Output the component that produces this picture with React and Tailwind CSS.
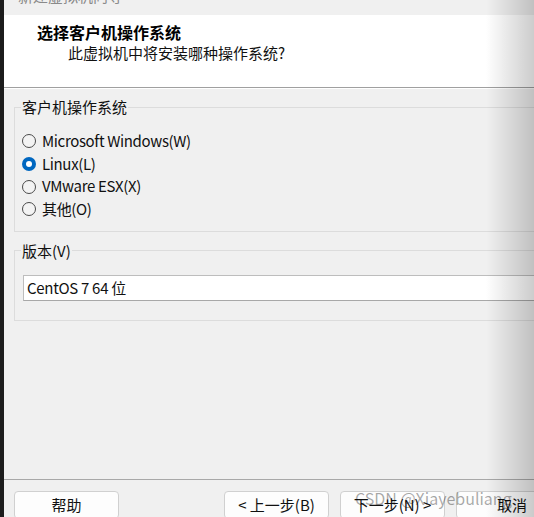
import React, { useState } from "react";

const font = "font-['Microsoft_YaHei','Noto_Sans_CJK_SC',sans-serif]";

const options = [
  { key: "win", label: "Microsoft Windows(W)" },
  { key: "linux", label: "Linux(L)" },
  { key: "esx", label: "VMware ESX(X)" },
  { key: "other", label: "其他(O)" },
];

function Radio({ checked, label, onClick }) {
  return (
    <button onClick={onClick} className="flex items-center h-[22.7px] gap-[6px] text-left">
      {checked ? (
        <span className="w-[14px] h-[14px] rounded-full bg-[#0067c0] flex items-center justify-center">
          <span className="w-[6px] h-[6px] rounded-full bg-white" />
        </span>
      ) : (
        <span className="w-[14px] h-[14px] rounded-full border border-[#4a4a4a] bg-[#f3f3f3]" />
      )}
      <span className="tracking-[-0.35px]">{label}</span>
    </button>
  );
}

function Btn({ children, className = "" }) {
  return (
    <button className={`w-[105px] h-[28px] shrink-0 rounded-[4px] border border-[#d0d0d0] bg-[#fdfdfd] text-[15px] text-[#111] ${className}`}>
      {children}
    </button>
  );
}

export default function App() {
  const [os, setOs] = useState("linux");

  return (
    <div className={`relative w-[534px] h-[517px] overflow-hidden flex bg-[#f0f0f0] text-[15px] text-[#111] ${font}`}>
      <div className="w-[4px] shrink-0 bg-[#1c1c1c]" />

      <div className="flex-1 flex flex-col min-w-0">
        {/* window title, mostly cut off */}
        <div className="h-[15px] overflow-hidden bg-[#f0f0f0] pl-[14px]">
          <div className="-mt-[12px] leading-[16px] text-[#8a8a8a]">新建虚拟机向导</div>
        </div>

        {/* header */}
        <div className="h-[73px] bg-white border-b border-[#a0a0a0] pt-[7px]">
          <div className="pl-[33px] text-[16px] font-bold leading-[20px] text-black">选择客户机操作系统</div>
          <div className="pl-[64px] mt-[1px] leading-[20px]">此虚拟机中将安装哪种操作系统?</div>
        </div>

        {/* body */}
        <div className="flex-1 border-t border-white pt-[8px] pl-[10px]">
          <fieldset className="w-[560px] border border-[#dcdcdc] pl-[6px] pt-[13px] pb-[10px]">
            <legend className="px-[1px] leading-[20px]">客户机操作系统</legend>
            <div className="flex flex-col pl-[1px]">
              {options.map((o) => (
                <Radio key={o.key} checked={os === o.key} label={o.label} onClick={() => setOs(o.key)} />
              ))}
            </div>
          </fieldset>

          <fieldset className="mt-[9px] w-[560px] border border-[#dcdcdc] pl-[6px] pt-[14px] pb-[19px]">
            <legend className="px-[1px] leading-[20px]">版本(V)</legend>
            <div className="ml-[2px] h-[26px] border border-[#bdbdbd] border-b-[#a8a8a8] bg-white flex items-center pl-[3px] tracking-[-0.3px]">
              CentOS 7 64 位
            </div>
          </fieldset>
        </div>

        {/* footer */}
        <div className="h-[38px] shrink-0 overflow-hidden border-t border-[#a8a8a8] pt-[11px] pl-[10px] flex gap-[11px]">
          <Btn className="mr-[94px]">帮助</Btn>
          <Btn>&lt; 上一步(B)</Btn>
          <Btn>下一步(N) &gt;</Btn>
          <Btn className="text-left pl-[40px]">取消</Btn>
        </div>
      </div>

      {/* watermark */}
      <div className="absolute left-[355px] top-[486px] text-[16px] text-black/35 pointer-events-none">CSDN @Xiayebuliang</div>

      {/* right-edge shadow */}
      <div className="absolute right-0 top-0 bottom-0 w-[48px] bg-gradient-to-r from-transparent to-black/20 pointer-events-none" />
    </div>
  );
}
